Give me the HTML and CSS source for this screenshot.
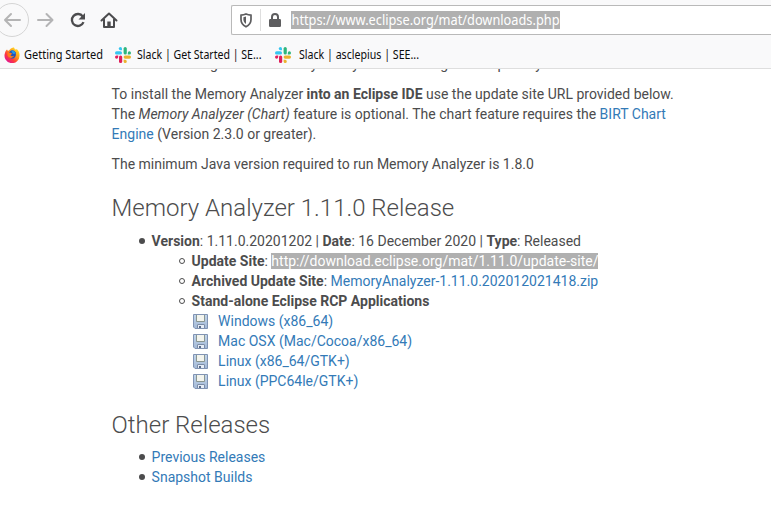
FILE: index.html
```html
<!DOCTYPE html>
<html lang="en">
<head>
<meta charset="utf-8">
<title>Memory Analyzer Downloads</title>
<link rel="stylesheet" href="styles.css">
</head>
<body>
<svg class="defs" width="0" height="0" aria-hidden="true">
  <defs>
    <linearGradient id="fox" x1="0.9" y1="0.1" x2="0.2" y2="0.9">
      <stop offset="0" stop-color="#ffe226"/><stop offset="0.4" stop-color="#ff9a1a"/><stop offset="0.7" stop-color="#ff3b3b"/><stop offset="1" stop-color="#e3178c"/>
    </linearGradient>
    <linearGradient id="disk" x1="0" y1="0" x2="0" y2="1">
      <stop offset="0" stop-color="#c3d6ea"/><stop offset="1" stop-color="#a3b8d6"/>
    </linearGradient>
    <symbol id="slack" viewBox="0 0 16 16">
      <g fill="#36c5f0"><rect x="0" y="4.3" width="7" height="3.2" rx="1.6"/><path d="M5.4 0a1.6 1.6 0 0 1 1.6 1.6v1.6H5.4a1.6 1.6 0 0 1 0-3.2z"/></g>
      <g fill="#2eb67d"><rect x="8.6" y="0" width="3.2" height="7.5" rx="1.6"/><path d="M16 5.9a1.6 1.6 0 0 1-1.6 1.6h-1.6V5.9a1.6 1.6 0 0 1 3.2 0z"/></g>
      <g fill="#e01e5a"><rect x="4" y="8.5" width="3.2" height="7.5" rx="1.6"/><path d="M0 10.1a1.6 1.6 0 0 1 1.6-1.6h1.6v1.6a1.6 1.6 0 0 1-3.2 0z"/></g>
      <g fill="#ecb22e"><rect x="8.6" y="8.5" width="7.4" height="3.2" rx="1.6"/><path d="M10.2 16a1.6 1.6 0 0 1-1.6-1.6v-1.6h1.6a1.6 1.6 0 0 1 0 3.2z"/></g>
    </symbol>
    <symbol id="floppy" viewBox="0 0 16 16">
      <path d="M.5.5h14v14H2L.5 13z" fill="url(#disk)" stroke="#8194b4"/>
      <path d="M4 1h7v6.500H4z" fill="#f3f4ee"/>
      <path d="M3.500 1v6.500h8V1" fill="none" stroke="#8a9690"/>
      <path d="M4 10h8v4H4z" fill="#e6edf7"/>
      <path d="M4.500 14v-3.500h7V14" fill="none" stroke="#7b8ca8"/>
      <path d="M6 12h2v2H6z" fill="#5b6c89"/>
    </symbol>
  </defs>
</svg>
<header class="chrome">
  <div class="toolbar">
    <span class="back"><svg width="18" height="16" viewBox="0 0 18 16"><path d="M17 8H2M8 2 2 8l6 6"/></svg></span>
    <svg class="icon forward" width="18" height="16" viewBox="0 0 18 16"><path d="M1 8h14M9.500 2l6 6-6 6"/></svg>
    <svg class="icon reload" width="16" height="16" viewBox="0 0 16 16"><path d="M13.500 10.200A6 6 0 1 1 12.800 4.500"/><path class="solid" d="M15 1v6.500H8.500z"/></svg>
    <svg class="icon home" width="18" height="17" viewBox="0 0 18 17"><path d="M1.500 8.500 9 1.500l7.500 7M4 7.500V15h10V7.500"/><path class="solid" d="M7.300 15V9.500h3.400V15z"/></svg>
    <div class="urlbar">
      <svg class="shield" width="14" height="15" viewBox="0 0 14 15"><path d="M7 1c2 .9 3.600 1.100 5 1.200V6.500c0 3.200-1.700 5.600-5 7.300-3.300-1.700-5-4.100-5-7.300V2.200C3.400 2.100 5 1.900 7 1z" fill="none" stroke="#5d5d5f" stroke-width="1.700"/><path d="M7 3.600v7.300C5.300 9.800 4.400 8.300 4.400 6.500V4.200z" fill="#5d5d5f"/></svg>
      <span class="divider"></span>
      <svg class="lock" width="12" height="14" viewBox="0 0 12 14"><path d="M3 7V4a3 3 0 0 1 6 0v3" fill="none" stroke="#5d5d5f" stroke-width="2"/><rect y="6" width="12" height="8" rx="1.200" fill="#5d5d5f"/></svg>
      <svg class="url" width="269" height="18"><text x="0.500" y="14" textLength="268" lengthAdjust="spacingAndGlyphs">https://www.eclipse.org/mat/downloads.php</text></svg>
    </div>
  </div>
  <nav class="bookmarks">
    <span class="bookmark"><svg width="16" height="16" viewBox="0 0 16 16"><path d="M3 2.500 4 4l2-1.500C7 1 9 .500 10 .500l1 2 2-.300c2 2 2.600 4 2.500 6A7.500 7.500 0 1 1 1 6c.300-1.500 1-2.500 2-3.500z" fill="url(#fox)"/><path d="M5.500 5C7 2.500 10 2.500 11.500 5.200c1.200 3-.400 6.300-3.300 6.300S3.700 9 4.800 6.500z" fill="#2352b8"/><path d="M7 3.500c2-.500 4 .500 4.500 3L9 7z" fill="#1b9bee"/><path d="M3.500 5.500l3 .200 1.800 1.100-1.800 1.400c.800 1.300 2.300 1 3.500.600-1.200 3-5.800 2.700-6.500-.500z" fill="#ff7c17"/></svg><svg class="label" width="80" height="18"><text x="1" y="13" textLength="79" lengthAdjust="spacingAndGlyphs">Getting Started</text></svg></span>
    <span class="bookmark team"><svg width="16" height="16"><use href="#slack"/></svg><svg class="label" width="126" height="18"><text x="1" y="13" textLength="124.500" lengthAdjust="spacingAndGlyphs">Slack | Get Started | SE...</text></svg></span>
    <span class="bookmark team"><svg width="16" height="16"><use href="#slack"/></svg><svg class="label" width="122" height="18"><text x="1" y="13" textLength="120" lengthAdjust="spacingAndGlyphs">Slack | asclepius | SEE...</text></svg></span>
  </nav>
</header>
<main class="page">
  <div class="content">
    <p class="scrolled">install a full-fledged IDE on the system you are running the heap analysis.</p>
    <p>To install the Memory Analyzer <b>into an Eclipse IDE</b> use the update site URL provided below.<br>The <i>Memory Analyzer (Chart)</i> feature is optional. The chart feature requires the <a>BIRT Chart<br>Engine</a> (Version 2.3.0 or greater).</p>
    <p>The minimum Java version required to run Memory Analyzer is 1.8.0</p>
    <h2>Memory Analyzer 1.11.0 Release</h2>
    <ul class="discs">
      <li><b>Version</b>: 1.11.0.20201202 | <b>Date</b>: 16 December 2020 | <b>Type</b>: Released
        <ul class="circles">
          <li><b>Update Site</b>: <span class="selected">http://download.eclipse.org/mat/1.11.0/update-site/</span></li>
          <li><b>Archived Update Site</b>: <a>MemoryAnalyzer-1.11.0.202012021418.zip</a></li>
          <li><b>Stand-alone Eclipse RCP Applications</b>
            <div class="downloads">
              <div class="download"><svg width="16" height="16"><use href="#floppy"/></svg><a>Windows (x86_64)</a></div>
              <div class="download"><svg width="16" height="16"><use href="#floppy"/></svg><a>Mac OSX (Mac/Cocoa/x86_64)</a></div>
              <div class="download"><svg width="16" height="16"><use href="#floppy"/></svg><a>Linux (x86_64/GTK+)</a></div>
              <div class="download"><svg width="16" height="16"><use href="#floppy"/></svg><a>Linux (PPC64le/GTK+)</a></div>
            </div>
          </li>
        </ul>
      </li>
    </ul>
    <h2 class="other">Other Releases</h2>
    <ul class="discs">
      <li><a>Previous Releases</a></li>
      <li><a>Snapshot Builds</a></li>
    </ul>
  </div>
</main>
</body>
</html>
```
FILE: styles.css
```css
*, *::before { box-sizing: border-box; }
body { margin: 0; height: 532px; overflow: hidden; background: #fff; color: #4c4c4d; font: 14px/20px Roboto, sans-serif; display: flex; flex-direction: column; }
svg { flex: none; display: block; }
.defs { position: absolute; }
.chrome { flex: none; height: 69px; background: #f9f9fa; border-bottom: 1px solid #dedede; overflow: hidden; }
.toolbar { height: 40px; display: flex; align-items: center; }
.back { flex: none; width: 34px; height: 34px; margin-left: -5px; border: 1px solid #d5d5d5; border-radius: 50%; display: flex; align-items: center; justify-content: center; }
.back svg, .icon { fill: none; stroke: #b4b4b5; stroke-width: 2; stroke-linecap: round; stroke-linejoin: round; }
.back svg { margin-right: 0; }
.forward { margin-left: 8px; }
.icon.reload { margin-left: 15px; stroke: #4c4c4e; stroke-linecap: butt; stroke-width: 2.3; }
.icon.home { margin-left: 14px; stroke: #4c4c4e; }
.icon .solid { fill: #4c4c4e; stroke: none; }
.urlbar { flex: 1; height: 30px; margin-left: 113px; border: 1px solid #b9b9b9; border-right: 0; border-radius: 2px 0 0 2px; background: #fff; display: flex; align-items: center; padding-left: 7px; }
.divider { width: 1px; height: 22px; background: #dedede; margin: 0 8px 0 7px; }
.url { margin-left: 10px; background: #b0b0b0; fill: #fff; font: 15px "Noto Sans", sans-serif; overflow: visible; }
.bookmarks { display: flex; height: 29px; align-items: center; padding-left: 4px; font: 12px/16px "Noto Sans", sans-serif; }
.bookmark { display: flex; align-items: center; gap: 3px; }
.label { fill: #0c0c0d; overflow: visible; }
.team { gap: 5px; margin-left: 12px; }
.team + .team { gap: 7px; margin-left: 13px; }
.page { flex: 1; overflow: hidden; display: flow-root; }
.content { margin-left: 111.6px; white-space: nowrap; display: flow-root; }
p { margin: 0 0 10px; }
.scrolled { margin-top: -15px; }
a { color: #337ab7; }
b { font-weight: 700; }
h2 { margin: 21px 0 10px; font-size: 24px; line-height: 26px; font-weight: 300; }
.other { margin-bottom: 9px; }
ul { margin: 0; padding: 0 0 0 40px; list-style: none; }
li::before { content: ""; display: inline-block; vertical-align: 2px; width: 6px; height: 6px; margin-left: -13px; margin-right: 7px; border-radius: 50%; background: #4c4c4d; }
.circles > li::before { background: none; border: 1px solid #4c4c4d; }
.selected { background: #b0b0b0; color: #fff; }
.download { display: flex; align-items: center; gap: 9.5px; height: 20px; padding-left: 1px; }
.download svg { margin-top: 2px; }
```
